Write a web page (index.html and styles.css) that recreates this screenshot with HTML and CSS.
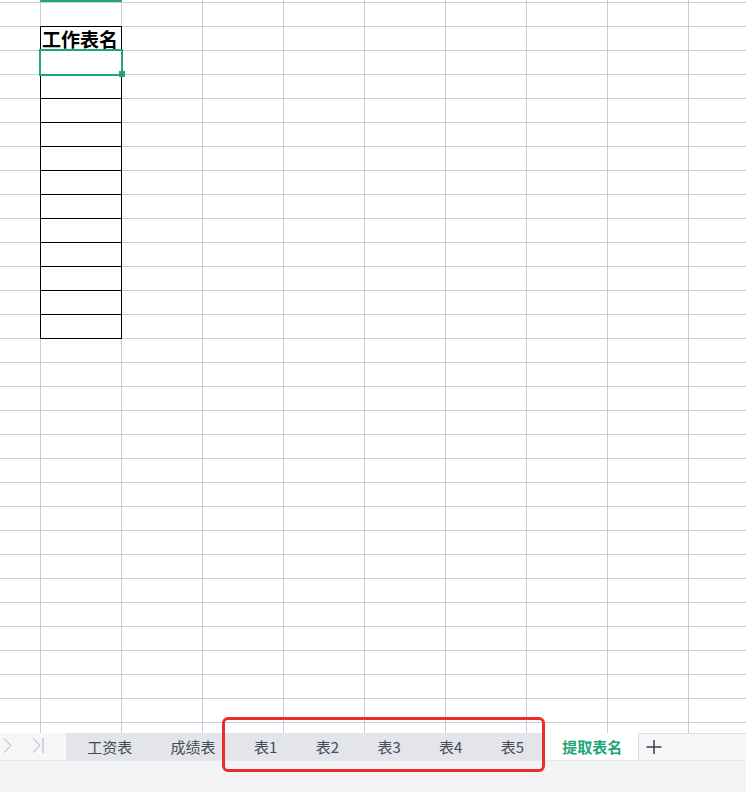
FILE: index.html
```html
<!DOCTYPE html>
<html>

<head>
  <meta charset="UTF-8">
  <title>提取表名</title>
  <link rel="stylesheet" href="styles.css">
</head>

<body>
  <div class="app">

    <div class="sheet">
      <div class="col_mark"></div>
      <div class="names">
        <div class="cell head">工作表名</div>
        <div class="cell active"><span class="handle"></span></div>
        <div class="cell"></div>
        <div class="cell"></div>
        <div class="cell"></div>
        <div class="cell"></div>
        <div class="cell"></div>
        <div class="cell"></div>
        <div class="cell"></div>
        <div class="cell"></div>
        <div class="cell"></div>
        <div class="cell"></div>
        <div class="cell"></div>
      </div>
    </div>

    <div class="tabbar">
      <div class="nav">
        <svg width="66" height="27" viewBox="0 0 66 27">
          <polyline points="4,5.5 11,12.5 4,19.5" fill="none" stroke="#a8acb4" stroke-width="1" />
          <polyline points="33,5.5 40,12.5 33,19.5" fill="none" stroke="#a8acb4" stroke-width="1" />
          <line x1="43" y1="5" x2="43" y2="20" stroke="#a8acb4" stroke-width="1" />
        </svg>
      </div>
      <div class="tabs">
        <div class="tab">工资表</div>
        <div class="tab">成绩表</div>
        <div class="tab">表1</div>
        <div class="tab">表2</div>
        <div class="tab">表3</div>
        <div class="tab">表4</div>
        <div class="tab">表5</div>
      </div>
      <div class="tab current">提取表名</div>
      <div class="rest">
        <svg width="16" height="16" viewBox="0 0 16 16">
          <line x1="0.5" y1="8" x2="15.5" y2="8" stroke="#3a3f47" stroke-width="1.5" />
          <line x1="8" y1="1" x2="8" y2="15" stroke="#3a3f47" stroke-width="1.5" />
        </svg>
      </div>
    </div>

    <div class="status"></div>

    <div class="mark"></div>
  </div>
</body>

</html>
```

FILE: styles.css
```css
html,
body {
  margin: 0;
  padding: 0;
  width: 746px;
  height: 792px;
  overflow: hidden;
  background-color: #fff;
  font-family: "Noto Sans CJK SC", sans-serif;
}

.app {
  position: relative;
  width: 746px;
  height: 792px;
}

.sheet {
  height: 733px;
  overflow: hidden;
  background-color: #fff;
  background-image:
    linear-gradient(to right, #c8cbd8 1px, transparent 1px),
    linear-gradient(to bottom, #c8cbd8 1px, transparent 1px);
  background-size: 81px 100%, 100% 24px;
  background-position: 40px 0, 0 2px;
}

.col_mark {
  margin-left: 40px;
  width: 82px;
  height: 2px;
  background-color: #22a674;
}

.names {
  margin: 24px 0 0 40px;
  width: 82px;
  border-style: solid;
  border-color: #000;
  border-width: 0 1px 1px;
  box-sizing: border-box;
  background-color: #fff;
}

.cell {
  height: 24px;
  border-top: 1px solid #000;
  box-sizing: border-box;
}

.head {
  padding-left: 1px;
  font-size: 19px;
  font-weight: 700;
  line-height: 23px;
  white-space: nowrap;
  color: #000;
}

.active {
  position: relative;
}

.active::after {
  content: "";
  position: absolute;
  top: -2px;
  left: -2px;
  right: -2px;
  bottom: -2px;
  border: 2px solid #22a674;
}

.handle {
  position: absolute;
  right: -4px;
  bottom: -3px;
  width: 6px;
  height: 6px;
  background-color: #22a674;
  z-index: 1;
}

.tabbar {
  display: flex;
  height: 27px;
}

.nav {
  width: 66px;
  flex-shrink: 0;
  background-color: #f6f7f9;
}

.nav svg {
  display: block;
}

.tabs {
  display: flex;
  padding-left: 2px;
  background-color: #e3e5ea;
}

.tab {
  padding: 0 19.2px;
  font-size: 15px;
  line-height: 27px;
  color: #454b57;
  white-space: nowrap;
}

.tab.current {
  padding: 0 16px 0 19px;
  background-color: #fff;
  color: #22a674;
  font-weight: 700;
  border-right: 1px solid #d9dce2;
}

.rest {
  flex: 1;
  display: flex;
  align-items: center;
  padding-left: 7px;
  background-color: #f5f6f8;
  border-top: 1px solid #dadde3;
  box-sizing: border-box;
}

.rest svg {
  display: block;
}

.status {
  height: 32px;
  background-color: #f3f4f6;
  border-top: 1px solid #e6e8ec;
  box-sizing: border-box;
}

.mark {
  position: absolute;
  left: 222px;
  top: 717px;
  width: 323px;
  height: 55px;
  border: 3.5px solid #ef2a2d;
  border-radius: 6px;
  box-sizing: border-box;
}
```
